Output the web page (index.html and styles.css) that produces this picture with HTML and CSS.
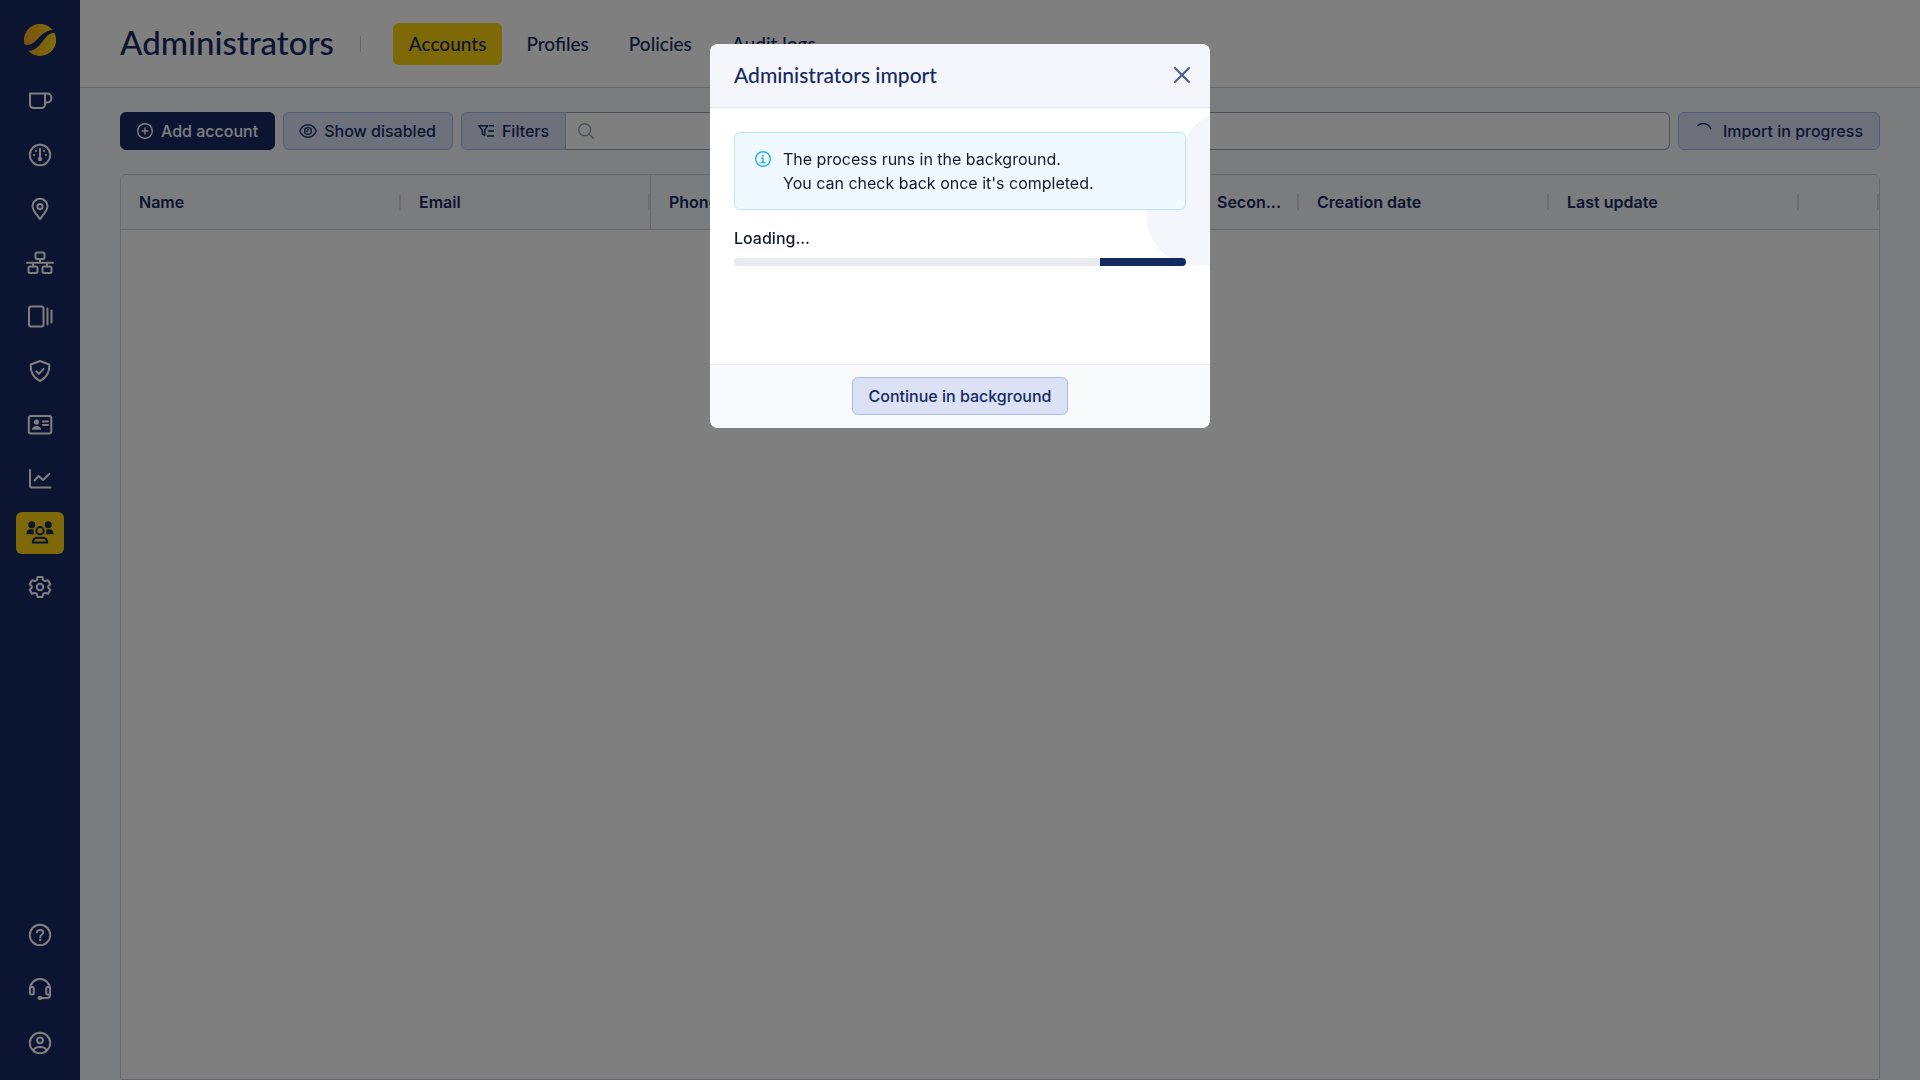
FILE: index.html
```html
<!DOCTYPE html>
<html lang="en">
<head>
    <meta charset="UTF-8">
    <meta name="viewport" content="width=device-width, initial-scale=1.0">
    <title>Administrators</title>
    <link rel="stylesheet" href="styles.css">
</head>
<body>
    <div class="app">
        <nav class="sidebar" aria-label="Main">
            <a href="#" class="logo" aria-label="Home">
                <svg width="32" height="32" viewBox="0 0 32 32">
                    <defs>
                        <linearGradient id="logoFill" x1="0" y1="0" x2="1" y2="0">
                            <stop offset="0" stop-color="#f7a41d"/>
                            <stop offset="1" stop-color="#ffd81c"/>
                        </linearGradient>
                    </defs>
                    <path fill="url(#logoFill)" d="M.6 20.5A16 16 0 0 1 28.500 6C22 6.500 18.500 10 14 14.500C9.500 19 6.500 22 .6 20.500ZM30.400 8.800A16 16 0 0 1 4.500 27C11 26.500 14.500 22.500 18.500 17.500C22.500 12.500 25.500 8.500 30.400 8.800Z"/>
                </svg>
            </a>
            <div class="menu">
                <a href="#" class="menu-item" aria-label="Start">
                    <svg class="icon" viewBox="0 0 28 28"><path d="M4 6.500h15v11a3.500 3.500 0 0 1-3.500 3.500h-8A3.500 3.500 0 0 1 4 17.500ZM19 6.500h2.500a3.800 3.800 0 0 1 3.800 3.800v1.400a3.800 3.800 0 0 1-3.800 3.800h-2.500"/></svg>
                </a>
                <a href="#" class="menu-item" aria-label="Dashboard">
                    <svg class="icon" viewBox="0 0 28 28"><circle cx="14" cy="14" r="10.200"/><path d="M14 8v9"/><circle class="solid" cx="14" cy="18" r="2.200"/><g class="solid"><circle cx="10" cy="10" r="1.100"/><circle cx="18" cy="10" r="1.100"/><circle cx="8" cy="14" r="1.100"/><circle cx="20" cy="14" r="1.100"/></g></svg>
                </a>
                <a href="#" class="menu-item" aria-label="Locations">
                    <svg class="icon" viewBox="0 0 28 28"><path d="M14 24.200C12.500 21.500 6.500 16 6.500 11.300a7.500 7.500 0 0 1 15 0C21.500 16 15.500 21.500 14 24.200Z"/><circle cx="14" cy="11.500" r="2.600"/></svg>
                </a>
                <a href="#" class="menu-item" aria-label="Network">
                    <svg class="icon" viewBox="0 0 28 28"><rect x="9.500" y="3.500" width="9" height="6.500" rx="1.500"/><rect x="2.500" y="17.500" width="9" height="6.500" rx="1.500"/><rect x="16.500" y="17.500" width="9" height="6.500" rx="1.500"/><path d="M1 13.800h26M14 10v3.800M7 13.800v3.700M21 13.800v3.700"/></svg>
                </a>
                <a href="#" class="menu-item" aria-label="Devices">
                    <svg class="icon" viewBox="0 0 28 28"><rect x="3" y="3.500" width="14.500" height="20" rx="2"/><path d="M21.500 5.500v16M25.500 7.500v12"/></svg>
                </a>
                <a href="#" class="menu-item" aria-label="Security">
                    <svg class="icon" viewBox="0 0 28 28"><path d="m14 4 9.300 3.500c.3 7-2 13-9.300 16.500C6.700 20.500 4.400 14.500 4.700 7.500ZM10.500 14.500l2.500 2.300 4.500-5"/></svg>
                </a>
                <a href="#" class="menu-item" aria-label="Users">
                    <svg class="icon" viewBox="0 0 28 28"><rect x="2.800" y="5" width="22.500" height="17.500" rx="2"/><path d="M17 10.500h5M17 14h5"/><circle class="solid" cx="10.500" cy="11" r="2.600"/><path class="solid" d="M6 18.700c0-2.500 2-3.700 4.500-3.700s4.500 1.200 4.500 3.700Z"/></svg>
                </a>
                <a href="#" class="menu-item" aria-label="Reports">
                    <svg class="icon" viewBox="0 0 28 28"><path d="M4 5v15.500a2 2 0 0 0 2 2h18.500M8.500 15.500l4-4.500 4.500 4 6.300-6"/></svg>
                </a>
                <a href="#" class="menu-item active" aria-label="Administrators">
                    <svg class="icon" viewBox="0 0 28 28"><g class="solid"><circle cx="5.800" cy="5.800" r="3.500"/><circle cx="22.200" cy="5.800" r="3.500"/><path d="M.5 15.300c0-3.300 1.500-5 4.300-5h3c-.6 2-.3 3.500.6 5ZM27.500 15.300c0-3.300-1.500-5-4.300-5h-3c.6 2 .3 3.500-.6 5Z"/></g><circle cx="14" cy="11.700" r="3.700"/><path d="M6.800 23.600c0-3.600 2.500-4.800 5-4.800h4.400c2.500 0 5 1.200 5 4.800Z"/></svg>
                </a>
                <a href="#" class="menu-item" aria-label="Settings">
                    <svg class="icon" viewBox="0 0 28 28"><path d="M11.600 4h4.800l.7 3 1.900 1.100 3-.9 2.300 4.100-2.200 2.100v1.200l2.200 2.100-2.300 4.100-3-.9-1.900 1.100-.7 3h-4.800l-.7-3L9 19.900l-3 .9-2.300-4.100 2.200-2.100v-1.200l-2.200-2.100L6 7.200l3 .9L10.900 7Z"/><circle cx="14" cy="14" r="3.200"/></svg>
                </a>
            </div>
            <div class="menu">
                <a href="#" class="menu-item" aria-label="Help">
                    <svg class="icon" viewBox="0 0 28 28"><circle cx="14" cy="14" r="10.200"/><path d="M11 11.200c.1-3.200 6.300-3 6.300.2 0 2.200-3 2-3 4.600"/><circle class="solid" cx="14.200" cy="18.800" r="1.300"/></svg>
                </a>
                <a href="#" class="menu-item" aria-label="Support">
                    <svg class="icon" viewBox="0 0 28 28"><path d="M4 14a10 10 0 0 1 20 0v6a3 3 0 0 1-3 3h-6"/><rect x="4" y="12" width="3.800" height="7.500" rx="1.500"/><rect x="20.200" y="12" width="3.800" height="7.500" rx="1.500"/><rect class="solid" x="11.500" y="21" width="5" height="4" rx="2"/></svg>
                </a>
                <a href="#" class="menu-item" aria-label="Profile">
                    <svg class="icon" viewBox="0 0 28 28"><circle cx="14" cy="14" r="10.200"/><circle cx="14" cy="11.300" r="2.900"/><path d="M7.500 21c1-2 3.500-3 6.500-3s5.500 1 6.500 3"/></svg>
                </a>
            </div>
        </nav>

        <div class="page">
            <header class="page-header">
                <h1>Administrators</h1>
                <span class="divider"></span>
                <nav class="tabs" aria-label="Administrators">
                    <a href="#" class="tab active">Accounts</a>
                    <a href="#" class="tab">Profiles</a>
                    <a href="#" class="tab">Policies</a>
                    <a href="#" class="tab">Audit logs</a>
                </nav>
            </header>

            <main class="content">
                <div class="toolbar">
                    <button type="button" class="btn btn-primary">
                        <svg viewBox="0 0 16 16"><circle cx="8" cy="8" r="7.300"/><path d="M8 5v6M5 8h6"/></svg>
                        Add account
                    </button>
                    <button type="button" class="btn">
                        <svg class="eye" viewBox="1 0 16 16"><path d="M.8 8C2.500 4 5.500 1.700 9 1.700S15.500 4 17.200 8C15.500 12 12.500 14.300 9 14.300S2.500 12 .8 8Z"/><circle cx="9" cy="8" r="3.400"/><path d="M9 6.500c.3 1.200-.4 2-1.500 1.600"/></svg>
                        Show disabled
                    </button>
                    <div class="search-group">
                        <button type="button" class="btn btn-filters">
                            <svg viewBox="0 0 16 16"><path d="M.8 2.700h9L6.700 7v5.500L4.300 11V7ZM11.500 2.700H16M10.500 8H16M9.500 13H16"/></svg>
                            Filters
                        </button>
                        <div class="search-box">
                            <svg viewBox="0 0 16 16"><circle cx="6.700" cy="6.700" r="6"/><path d="m11 11 4.700 4.700"/></svg>
                            <input type="text" id="search" aria-label="Search">
                        </div>
                    </div>
                    <button type="button" class="btn">
                        <svg class="spinner" viewBox="0 0 20 16"><path d="M3 2.500A8 8 0 0 1 15.800 5.700"/></svg>
                        Import in progress
                    </button>
                </div>

                <div class="grid">
                    <table>
                        <thead>
                            <tr>
                                <th class="col-name">Name</th>
                                <th class="col-email">Email</th>
                                <th>Phone</th>
                                <th class="col-second">Secon...</th>
                                <th class="col-date">Creation date</th>
                                <th class="col-date">Last update</th>
                                <th class="col-actions"></th>
                            </tr>
                        </thead>
                    </table>
                </div>
            </main>
        </div>
    </div>

    <div class="overlay">
        <div class="modal" role="dialog" aria-modal="true" aria-labelledby="modalTitle">
            <div class="modal-header">
                <h2 id="modalTitle">Administrators import</h2>
                <button type="button" class="close" aria-label="Close">
                    <svg viewBox="0 0 16 16"><path d="m1 1 14 14M15 1 1 15"/></svg>
                </button>
            </div>
            <div class="modal-body">
                <svg class="cloud" viewBox="0 0 64 151"><path d="M64 1A48 48 0 0 0 36 43V57A48 48 0 0 0 1 103A48 48 0 0 0 49 151H64Z"/></svg>
                <div class="alert">
                    <svg viewBox="0 0 16 16"><circle cx="8" cy="8" r="7.300"/><path d="M6.500 7.300H8v4M6 11.500h4"/><circle class="dot" cx="7.900" cy="4.800" r="1"/></svg>
                    <p>The process runs in the background.<br>You can check back once it's completed.</p>
                </div>
                <div class="loading-label" id="loadingLabel">Loading...</div>
                <div class="progress" role="progressbar" aria-labelledby="loadingLabel">
                    <div class="progress-value"></div>
                </div>
            </div>
            <div class="modal-footer">
                <button type="button" class="btn">Continue in background</button>
            </div>
        </div>
    </div>
</body>
</html>
```
FILE: styles.css
```css
* {
    box-sizing: border-box;
}

body {
    margin: 0;
    font-family: Inter, "Liberation Sans", sans-serif;
    font-size: 16px;
    line-height: 24px;
    color: #111a2e;
    background-color: #f7f9fc;
}

.app {
    display: flex;
    height: 100vh;
}

svg {
    flex: none;
    fill: none;
    stroke: currentColor;
    stroke-linecap: round;
    stroke-linejoin: round;
}

/* Sidebar */
.sidebar {
    display: flex;
    flex-direction: column;
    align-items: center;
    gap: 24px;
    width: 80px;
    padding: 24px 16px 16px;
    background-color: #162a62;
}

.logo {
    display: flex;
}

.logo svg {
    stroke: none;
}

.menu {
    display: flex;
    flex-direction: column;
    gap: 12px;
}

.menu:last-child {
    margin-top: auto;
}

.menu-item {
    display: flex;
    align-items: center;
    justify-content: center;
    width: 48px;
    height: 42px;
    border-radius: 6px;
    color: #fff;
}

.menu-item.active {
    background-color: #fdd213;
    color: #162a62;
}

.icon {
    width: 28px;
    height: 28px;
    stroke-width: 2;
}

.icon .solid {
    fill: currentColor;
    stroke: none;
}

/* Header */
.page {
    display: flex;
    flex: 1;
    flex-direction: column;
    min-width: 0;
}

.page-header {
    display: flex;
    align-items: center;
    height: 88px;
    padding: 0 40px;
    border-bottom: 1px solid #d2d6dd;
    background-color: #fff;
}

h1,
h2 {
    margin: 0;
    font-family: Lato, sans-serif;
    font-weight: 500;
    color: #162a62;
}

h1 {
    padding-bottom: 4px;
    font-size: 33px;
    line-height: 40px;
}

.divider {
    width: 1px;
    height: 16px;
    margin: 0 32px 0 26px;
    background-color: #c4c7cf;
}

.tabs {
    display: flex;
    gap: 8px;
}

.tab {
    padding: 9px 16px;
    border-radius: 6px;
    font-family: Lato, sans-serif;
    font-size: 19px;
    font-weight: 500;
    color: #162a62;
    text-decoration: none;
}

.tab.active {
    background-color: #fdd213;
}

/* Toolbar */
.content {
    display: flex;
    flex: 1;
    flex-direction: column;
    gap: 24px;
    padding: 24px 40px 0;
}

.toolbar {
    display: flex;
    gap: 8px;
}

.btn {
    display: flex;
    align-items: center;
    gap: 8px;
    height: 38px;
    padding: 0 16px;
    border: 1px solid #a9b9ee;
    border-radius: 6px;
    background-color: #dbe2f6;
    font-family: inherit;
    font-size: 16px;
    font-weight: 500;
    color: #162a62;
    white-space: nowrap;
    cursor: pointer;
}

.btn svg {
    width: 16px;
    height: 16px;
    stroke-width: 1.4;
}

.btn .eye {
    overflow: visible;
}

.btn .spinner {
    width: 20px;
}

.btn-primary {
    border-color: #162a62;
    background-color: #162a62;
    color: #fff;
}

.search-group {
    display: flex;
    flex: 1;
}

.btn-filters {
    border-radius: 6px 0 0 6px;
}

.search-box {
    display: flex;
    flex: 1;
    align-items: center;
    padding: 0 12px;
    border: 1px solid #98a1b2;
    border-left: 0;
    border-radius: 0 6px 6px 0;
    background-color: #fff;
    color: #98a1b2;
}

.search-box svg {
    width: 16px;
    height: 16px;
    stroke-width: 1.4;
}

.search-box input {
    flex: 1;
    height: 36px;
    padding: 0 12px;
    border: 0;
    outline: 0;
    background: none;
    font: inherit;
}

/* Table */
.grid {
    flex: 1;
    border: 1px solid #d2d3d6;
    border-radius: 6px 6px 0 0;
    background-color: #fff;
    overflow: hidden;
}

table {
    width: 100%;
    border-collapse: separate;
    border-spacing: 0;
    table-layout: fixed;
}

th {
    position: relative;
    height: 55px;
    padding: 0 12px 0 18px;
    border-bottom: 1px solid #d2d3d6;
    background-color: #f7f9fc;
    font-weight: 600;
    color: #162a62;
    text-align: left;
    white-space: nowrap;
}

th::after {
    content: "";
    position: absolute;
    top: 19px;
    right: 0;
    width: 2px;
    height: 16px;
    background-color: #dadce1;
}

.col-name {
    width: 280px;
}

.col-email {
    width: 250px;
    border-right: 1px solid #d2d3d6;
}

.col-second {
    width: 100px;
}

.col-date {
    width: 250px;
}

.col-actions {
    width: 80px;
}

/* Modal */
.overlay {
    position: fixed;
    inset: 0;
    display: flex;
    align-items: flex-start;
    justify-content: center;
    padding-top: 44px;
    background-color: rgba(0, 0, 0, 0.5);
}

.modal {
    width: 500px;
    border-radius: 8px;
    background-color: #fff;
    overflow: hidden;
}

.modal-header {
    display: flex;
    align-items: center;
    justify-content: space-between;
    height: 64px;
    padding: 0 16px 2px 24px;
    border-bottom: 1px solid #e9eaef;
    background-color: #f5f6fc;
}

h2 {
    font-size: 21px;
    line-height: 24px;
}

.close {
    display: flex;
    padding: 4px;
    border: 0;
    background: none;
    color: #4a5b8c;
    cursor: pointer;
}

.close svg {
    width: 16px;
    height: 16px;
    stroke-width: 2;
}

.modal-body {
    position: relative;
    min-height: 256px;
    padding: 24px;
}

.cloud {
    position: absolute;
    top: 6px;
    right: 0;
    width: 64px;
    height: 151px;
    fill: #f5f6fc;
    stroke: none;
}

.alert {
    position: relative;
    display: flex;
    gap: 12px;
    margin-bottom: 16px;
    padding: 14px 20px;
    border: 1px solid #b9e6fe;
    border-radius: 6px;
    background-color: #f0f9ff;
}

.alert svg {
    width: 16px;
    height: 16px;
    margin-top: 4px;
    stroke-width: 1.4;
    color: #29aef0;
}

.alert .dot {
    fill: currentColor;
    stroke: none;
}

.alert p {
    margin: 0;
}

.loading-label {
    margin-bottom: 8px;
    font-weight: 500;
}

.progress {
    position: relative;
    display: flex;
    justify-content: flex-end;
    height: 8px;
    border-radius: 4px;
    background-color: #eaebef;
    overflow: hidden;
}

.progress-value {
    width: 19%;
    background-color: #162a62;
}

.modal-footer {
    display: flex;
    justify-content: center;
    padding: 12px 24px 13px;
    border-top: 1px solid #e9eaef;
    background-color: #f9fafc;
}
```
